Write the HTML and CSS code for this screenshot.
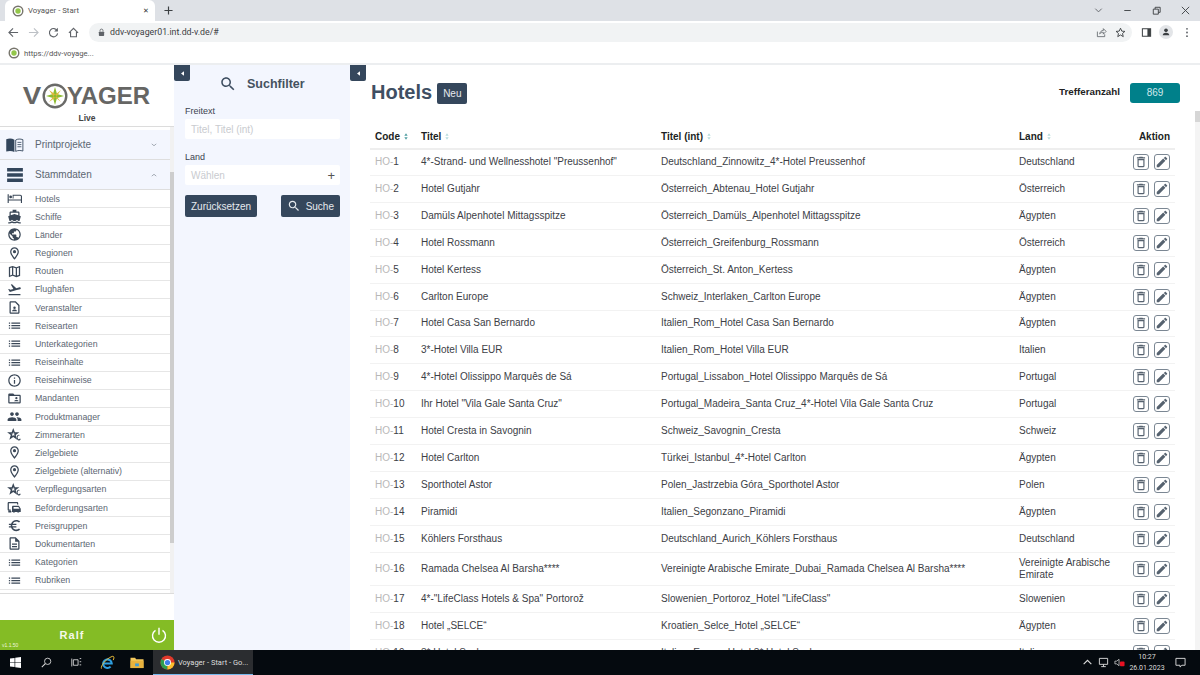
FILE: index.html
```html
<!DOCTYPE html>
<html>
<head>
    <meta charset="UTF-8">
    <title>Voyager - Start</title>
    <link rel="stylesheet" href="styles.css">
</head>
<body>
<svg class="defs" width="0" height="0">
    <symbol id="i-list" viewBox="0 0 24 24"><path d="M3 13h2v-2H3v2zm0 4h2v-2H3v2zm0-8h2V7H3v2zm4 4h14v-2H7v2zm0 4h14v-2H7v2zM7 7v2h14V7H7z"/></symbol>
    <symbol id="i-place" viewBox="0 0 24 24"><path d="M12 2C8.13 2 5 5.13 5 9c0 5.25 7 13 7 13s7-7.75 7-13c0-3.87-3.13-7-7-7zM7 9c0-2.76 2.24-5 5-5s5 2.24 5 5c0 2.88-2.88 7.19-5 9.88C9.92 16.21 7 11.85 7 9z"/><circle cx="12" cy="9" r="2.5"/></symbol>
    <symbol id="i-globe" viewBox="0 0 24 24"><path d="M12 2C6.48 2 2 6.48 2 12s4.48 10 10 10 10-4.48 10-10S17.52 2 12 2zm-1 17.93c-3.95-.49-7-3.85-7-7.93 0-.62.08-1.21.21-1.79L9 15v1c0 1.1.9 2 2 2v1.93zm6.9-2.54c-.26-.81-1-1.39-1.9-1.39h-1v-3c0-.55-.45-1-1-1H8v-2h2c.55 0 1-.45 1-1V7h2c1.1 0 2-.9 2-2v-.41c2.93 1.19 5 4.06 5 7.41 0 2.08-.8 3.97-2.1 5.39z"/></symbol>
    <symbol id="i-map" viewBox="0 0 24 24"><path d="M20.5 3l-.16.03L15 5.1 9 3 3.36 4.9c-.21.07-.36.25-.36.48V20.5c0 .28.22.5.5.5l.16-.03L9 18.9l6 2.1 5.64-1.9c.21-.07.36-.25.36-.48V3.5c0-.28-.22-.5-.5-.5zM10 5.47l4 1.4v11.66l-4-1.4V5.47zm-5 .99l3-1.01v11.7l-3 1.16V6.46zm14 11.08l-3 1.01V6.86l3-1.16v11.84z"/></symbol>
    <symbol id="i-plane" viewBox="0 0 24 24"><path d="M2.5 19h19v2h-19zm19.57-9.36c-.21-.8-1.04-1.28-1.84-1.06L14.92 10l-6.9-6.43-1.93.51 4.14 7.17-4.97 1.33-1.97-1.54-1.45.39 1.82 3.16.77 1.33 1.6-.43 5.31-1.42 4.35-1.16L21 11.49c.81-.23 1.28-1.05 1.07-1.85z"/></symbol>
    <symbol id="i-info" viewBox="0 0 24 24"><path d="M11 7h2v2h-2zm0 4h2v6h-2zm1-9C6.48 2 2 6.48 2 12s4.48 10 10 10 10-4.48 10-10S17.52 2 12 2zm0 18c-4.41 0-8-3.59-8-8s3.59-8 8-8 8 3.59 8 8-3.59 8-8 8z"/></symbol>
    <symbol id="i-doc" viewBox="0 0 24 24"><path d="M8 16h8v2H8zm0-4h8v2H8zm6-10H6c-1.1 0-2 .9-2 2v16c0 1.1.89 2 1.99 2H18c1.1 0 2-.9 2-2V8l-6-6zm4 18H6V4h7v5h5v11z"/></symbol>
    <symbol id="i-contact" viewBox="0 0 24 24"><path d="M14 2H6c-1.1 0-2 .9-2 2v16c0 1.1.9 2 2 2h12c1.1 0 2-.9 2-2V8l-6-6zm4 18H6V4h7l5 5v11z"/><circle cx="12" cy="12.5" r="2"/><path d="M8 18c0-1.8 2.2-2.7 4-2.7s4 .9 4 2.7z"/></symbol>
    <symbol id="i-euro" viewBox="0 0 24 24"><path d="M15 18.5c-2.51 0-4.68-1.42-5.76-3.5H15v-2H8.58c-.05-.33-.08-.66-.08-1s.03-.67.08-1H15V9H9.24C10.32 6.92 12.5 5.5 15 5.5c1.61 0 3.09.59 4.23 1.57L21 5.3C19.41 3.87 17.3 3 15 3c-3.92 0-7.24 2.51-8.48 6H3v2h3.06c-.04.33-.06.66-.06 1s.02.67.06 1H3v2h3.52c1.24 3.49 4.56 6 8.48 6 2.31 0 4.41-.87 6-2.3l-1.78-1.77c-1.13.98-2.6 1.57-4.22 1.57z"/></symbol>
    <symbol id="i-people" viewBox="0 0 24 24"><path d="M16 11c1.66 0 2.99-1.34 2.99-3S17.66 5 16 5c-1.66 0-3 1.34-3 3s1.34 3 3 3zm-8 0c1.66 0 2.99-1.34 2.99-3S9.66 5 8 5C6.34 5 5 6.34 5 8s1.34 3 3 3zm0 2c-2.33 0-7 1.17-7 3.5V19h14v-2.5c0-2.33-4.67-3.5-7-3.5zm8 0c-.29 0-.62.02-.97.05 1.16.84 1.97 1.97 1.97 3.45V19h6v-2.5c0-2.33-4.67-3.5-7-3.5z"/></symbol>
    <symbol id="i-folder" viewBox="0 0 24 24"><path d="M20 6h-8l-2-2H4c-1.1 0-2 .9-2 2v12c0 1.1.9 2 2 2h16c1.1 0 2-.9 2-2V8c0-1.1-.9-2-2-2zm0 12H4V8h16v10z"/><circle cx="15" cy="11.5" r="1.8"/><path d="M11.5 16.5c0-1.5 2-2.2 3.5-2.2s3.5.7 3.5 2.2z"/></symbol>
    <symbol id="i-star" viewBox="0 0 24 24"><path fill-rule="evenodd" d="M10 1.5l2.6 7h7.2l-5.8 4.4 2.2 7.3-6.200-4.400-6.200 4.400 2.200-7.300L.2 8.500h7.200zm0 6.500l-.9 2.600H6.800l1.900 1.500-.7 2.400 2-1.400 2 1.400-.7-2.400 1.900-1.500h-2.300z"/><path d="M19.500 12.500a3.500 4.500 0 1 0 2.500 6.500l-1.400-.7a2 2.800 0 1 1-.6-4z"/></symbol>
    <symbol id="i-ship" viewBox="0 0 24 24"><path d="M20 21c-1.39 0-2.78-.47-4-1.32-2.44 1.71-5.56 1.71-8 0C6.78 20.53 5.39 21 4 21H2v2h2c1.38 0 2.74-.35 4-.99 2.52 1.29 5.48 1.29 8 0 1.26.65 2.62.99 4 .99h2v-2h-2zM3.95 19H4c1.6 0 3.02-.88 4-2 .98 1.12 2.4 2 4 2s3.02-.88 4-2c.98 1.12 2.4 2 4 2h.05l1.89-6.68c.08-.26.06-.54-.06-.78s-.34-.42-.6-.5L20 10.62V6c0-1.1-.9-2-2-2h-3V1H9v3H6c-1.1 0-2 .9-2 2v4.62l-1.29.42c-.26.08-.48.26-.6.5s-.15.52-.06.78L3.95 19zM6 6h12v3.97L12 8 6 9.97V6z"/></symbol>
    <symbol id="i-bed" viewBox="0 0 24 24"><path d="M1 5h1.800v8.500h19.400V8.500c0-.6-.4-1-1-1H10.500v4.500H9V6h12.200c1.500 0 2.800 1.200 2.800 2.500V19h-1.800v-3.700H2.800V19H1z"/><circle cx="5.800" cy="9.500" r="2.200"/></symbol>
    <symbol id="i-transport" viewBox="0 0 24 24"><path d="M3 3h13c1.100 0 2 .9 2 2v2h-2V5H3v10h3v2H3c-1.100 0-2-.9-2-2V5c0-1.100.9-2 2-2z"/><path d="M10 9h9l3 5v5h-2.200a2 2 0 0 1-3.600 0h-3.400a2 2 0 0 1-3.600 0H8v-8c0-1.100.9-2 2-2zm.5 2v3H20l-1.800-3z"/><rect x="2" y="17" width="5" height="3" rx="1"/></symbol>
    <symbol id="i-trash" viewBox="0 0 24 24"><path d="M6 19c0 1.100.9 2 2 2h8c1.100 0 2-.9 2-2V7H6v12zM8 9h8v10H8V9zm7.500-5l-1-1h-5l-1 1H5v2h14V4z"/></symbol>
    <symbol id="i-edit" viewBox="0 0 24 24"><path d="M3 17.250V21h3.750L17.810 9.940l-3.750-3.750L3 17.250zM20.710 7.040c.39-.39.39-1.020 0-1.410l-2.340-2.340c-.39-.39-1.020-.39-1.410 0l-1.830 1.830 3.750 3.750 1.830-1.830z"/></symbol>
    <symbol id="i-search" viewBox="0 0 24 24"><path d="M15.500 14h-.79l-.28-.27C15.410 12.590 16 11.110 16 9.500 16 5.910 13.090 3 9.500 3S3 5.910 3 9.500 5.910 16 9.500 16c1.610 0 3.090-.59 4.230-1.570l.27.28v.79l5 4.990L20.490 19l-4.990-5zm-6 0C7.010 14 5 11.990 5 9.500S7.010 5 9.500 5 14 7.010 14 9.500 11.990 14 9.500 14z"/></symbol>
    <symbol id="i-sort" viewBox="0 0 6 10"><path d="M3 0l2.500 3.800h-5z"/><path d="M3 10L.5 6.200h5z"/></symbol>
    <symbol id="i-fav" viewBox="0 0 12 12"><circle cx="6" cy="6" r="4.800" fill="none" stroke="#77756c" stroke-width="1.400"/><circle cx="6" cy="6" r="2.700" fill="#93c64a"/></symbol>
</svg>

<div class="tabbar">
    <div class="tab">
        <svg class="fav"><use href="#i-fav"/></svg>
        <span class="tab-title">Voyager - Start</span>
        <span class="tab-close">&#10005;</span>
    </div>
    <svg class="new-tab" viewBox="0 0 10 10"><path d="M5 .5v9M.5 5h9" stroke="#3c4043" stroke-width="1.300"/></svg>
    <div class="window-btns">
        <svg viewBox="0 0 12 12"><path d="M2.500 4L6 7.500 9.500 4" fill="none" stroke="#5f6368" stroke-width="1"/></svg>
        <svg viewBox="0 0 12 12"><path d="M2.500 6h7" stroke="#3c4043" stroke-width="1"/></svg>
        <svg viewBox="0 0 12 12"><path d="M2.500 4.500h5.500v5.500H2.500zM4.500 4.500V2.500H10V8H8" fill="none" stroke="#3c4043" stroke-width="1"/></svg>
        <svg viewBox="0 0 12 12"><path d="M2 2l8 8M10 2l-8 8" stroke="#3c4043" stroke-width="1"/></svg>
    </div>
</div>

<div class="toolbar">
    <svg class="nav-icon" viewBox="0 0 12 12"><path d="M11 6H1.500M5.500 1.500L1 6l4.500 4.500" fill="none" stroke="#5f6368" stroke-width="1.200"/></svg>
    <svg class="nav-icon" viewBox="0 0 12 12"><path d="M1 6h9.500M6.500 1.500L11 6l-4.500 4.500" fill="none" stroke="#bdc1c6" stroke-width="1.200"/></svg>
    <svg class="nav-icon" viewBox="0 0 12 12"><path d="M10 4A4.500 4.500 0 1 0 10.500 7" fill="none" stroke="#5f6368" stroke-width="1.200"/><path d="M10.800 .8v4h-4z" fill="#5f6368"/></svg>
    <svg class="nav-icon" viewBox="0 0 12 12"><path d="M1 6.500L6 1.500l5 5M2.800 5.500v5.200h6.400V5.500" fill="none" stroke="#5f6368" stroke-width="1.200"/></svg>
    <div class="omnibox">
        <svg class="lock" viewBox="0 0 8 10"><rect x="1" y="4" width="6" height="5" rx=".8" fill="#5f6368"/><path d="M2.300 4V2.800a1.700 1.700 0 0 1 3.400 0V4" fill="none" stroke="#5f6368"/></svg>
        <span class="url">ddv-voyager01.int.dd-v.de/#</span>
        <svg class="omni-icon" viewBox="0 0 12 12"><path d="M1.500 5v5.500h8V8M4 7.500C4.500 5 6 3.800 8 3.800V1.800l3 3-3 3V5.800C6.500 5.800 5 6.300 4 7.500z" fill="none" stroke="#5f6368" stroke-width=".9"/></svg>
        <svg class="omni-icon" viewBox="0 0 12 12"><path d="M6 1.300l1.400 3.200 3.400.3-2.600 2.300.8 3.400L6 8.700l-3 1.800.8-3.400L1.200 4.800l3.400-.3z" fill="none" stroke="#3c4043" stroke-width="1"/></svg>
    </div>
    <svg class="side-icon" viewBox="0 0 12 12"><path d="M1.500 2h9v8h-9z" fill="none" stroke="#3c4043" stroke-width="1.100"/><path d="M7 2h3.500v8H7z" fill="#3c4043"/></svg>
    <span class="avatar"><svg viewBox="0 0 12 12"><circle cx="6" cy="4" r="2.200" fill="#3c4043"/><path d="M2 10c0-2 2.200-3 4-3s4 1 4 3z" fill="#3c4043"/></svg></span>
    <svg class="menu-dots" viewBox="0 0 4 12"><circle cx="2" cy="2" r="1" fill="#5f6368"/><circle cx="2" cy="6" r="1" fill="#5f6368"/><circle cx="2" cy="10" r="1" fill="#5f6368"/></svg>
</div>

<div class="bookmarks">
    <svg class="fav"><use href="#i-fav"/></svg>
    <span>https://ddv-voyage...</span>
</div>

<div class="app">
    <aside class="sidebar">
        <div class="logo-box">
            <div class="logo">
                <span>V</span>
                <svg class="compass" viewBox="0 0 26 26">
                    <circle cx="13" cy="13" r="11.300" fill="none" stroke="#6a6a68" stroke-width="2.400"/>
                    <path d="M13 4l2 7 7 2-7 2-2 7-2-7-7-2 7-2z" fill="#8dbb2f"/>
                    <path d="M7 7l6.500 4.500L19 7l-4.500 6.500L19 19l-5.500-4.500L7 19l4.500-5.500z" fill="#e0b83c"/>
                    <circle cx="13" cy="13" r="1.500" fill="#8dbb2f"/>
                </svg>
                <span>YAGER</span>
            </div>
            <div class="live">Live</div>
        </div>

        <div class="menu-wrap">
            <div class="menu">
                <div class="group">
                    <svg class="group-icon" viewBox="0 0 20 16"><path d="M0 1.500C3 .3 6.500.3 9.300 2v14C6.500 14.500 3 14.500 0 15.500z" fill="#33465c"/><path d="M10.800 2.300C13 .9 16.300.9 19 1.900v13c-2.700-.9-6-.9-8.200.4z" fill="none" stroke="#33465c"/><path d="M12.800 5h4.500M12.800 7.500h4.500M12.800 10h4.500" stroke="#33465c" stroke-width=".9"/></svg>
                    <span>Printprojekte</span>
                    <svg class="chev" viewBox="0 0 8 5"><path d="M1 1l3 2.500L7 1" fill="none" stroke="#8a929c"/></svg>
                </div>
                <div class="group">
                    <svg class="group-icon" viewBox="0 0 20 16"><rect x="1" y="0" width="18" height="4" fill="#33465c"/><rect x="1" y="6" width="18" height="4" fill="#33465c"/><rect x="1" y="12" width="18" height="4" fill="#33465c"/></svg>
                    <span>Stammdaten</span>
                    <svg class="chev" viewBox="0 0 8 5"><path d="M1 4l3-2.500L7 4" fill="none" stroke="#8a929c"/></svg>
                </div>
                <a class="item"><svg><use href="#i-bed"/></svg>Hotels</a>
                <a class="item"><svg><use href="#i-ship"/></svg>Schiffe</a>
                <a class="item"><svg><use href="#i-globe"/></svg>Länder</a>
                <a class="item"><svg><use href="#i-place"/></svg>Regionen</a>
                <a class="item"><svg><use href="#i-map"/></svg>Routen</a>
                <a class="item"><svg><use href="#i-plane"/></svg>Flughäfen</a>
                <a class="item"><svg><use href="#i-contact"/></svg>Veranstalter</a>
                <a class="item"><svg><use href="#i-list"/></svg>Reisearten</a>
                <a class="item"><svg><use href="#i-list"/></svg>Unterkategorien</a>
                <a class="item"><svg><use href="#i-list"/></svg>Reiseinhalte</a>
                <a class="item"><svg><use href="#i-info"/></svg>Reisehinweise</a>
                <a class="item"><svg><use href="#i-folder"/></svg>Mandanten</a>
                <a class="item"><svg><use href="#i-people"/></svg>Produktmanager</a>
                <a class="item"><svg><use href="#i-star"/></svg>Zimmerarten</a>
                <a class="item"><svg><use href="#i-place"/></svg>Zielgebiete</a>
                <a class="item"><svg><use href="#i-place"/></svg>Zielgebiete (alternativ)</a>
                <a class="item"><svg><use href="#i-star"/></svg>Verpflegungsarten</a>
                <a class="item"><svg><use href="#i-transport"/></svg>Beförderungsarten</a>
                <a class="item"><svg><use href="#i-euro"/></svg>Preisgruppen</a>
                <a class="item"><svg><use href="#i-doc"/></svg>Dokumentarten</a>
                <a class="item"><svg><use href="#i-list"/></svg>Kategorien</a>
                <a class="item"><svg><use href="#i-list"/></svg>Rubriken</a>
            </div>
            <div class="menu-scroll"><div class="menu-thumb"></div></div>
        </div>

        <div class="user-bar">
            <span class="user-name">Ralf</span>
            <svg class="power" viewBox="0 0 16 16"><path d="M4.500 3.300a6.500 6.500 0 1 0 7 0" fill="none" stroke="#fff" stroke-width="1.400"/><path d="M8 .8v7" stroke="#fff" stroke-width="1.400"/></svg>
            <span class="version">v1.1.50</span>
        </div>
    </aside>

    <section class="filter">
        <button class="collapse"><svg viewBox="0 0 4 6"><path d="M4 0v6L0 3z"/></svg></button>
        <div class="filter-head">
            <svg><use href="#i-search"/></svg>
            <span>Suchfilter</span>
        </div>
        <label class="field-label">Freitext</label>
        <div class="field"><span>Titel, Titel (int)</span></div>
        <label class="field-label">Land</label>
        <div class="field"><span>Wählen</span><b>+</b></div>
        <div class="filter-btns">
            <button class="btn">Zurücksetzen</button>
            <button class="btn"><svg><use href="#i-search"/></svg>Suche</button>
        </div>
    </section>

    <main class="content">
        <button class="collapse"><svg viewBox="0 0 4 6"><path d="M4 0v6L0 3z"/></svg></button>
        <div class="page-head">
            <h1>Hotels</h1>
            <button class="btn btn-new">Neu</button>
            <span class="count-label">Trefferanzahl</span>
            <span class="count">869</span>
        </div>
        <table class="hotels">
            <colgroup><col class="c-code"><col class="c-title"><col class="c-int"><col class="c-land"><col class="c-act"></colgroup>
            <thead>
                <tr>
                    <th>Code <svg class="sort first"><use href="#i-sort"/></svg></th>
                    <th>Titel <svg class="sort"><use href="#i-sort"/></svg></th>
                    <th>Titel (int) <svg class="sort"><use href="#i-sort"/></svg></th>
                    <th>Land <svg class="sort"><use href="#i-sort"/></svg></th>
                    <th class="act-head">Aktion</th>
                </tr>
            </thead>
            <tbody>
                <tr><td><i>HO-</i>1</td><td>4*-Strand- und Wellnesshotel "Preussenhof"</td><td>Deutschland_Zinnowitz_4*-Hotel Preussenhof</td><td>Deutschland</td><td class="act"><span class="ico"><svg><use href="#i-trash"/></svg></span><span class="ico"><svg><use href="#i-edit"/></svg></span></td></tr>
                <tr><td><i>HO-</i>2</td><td>Hotel Gutjahr</td><td>Österreich_Abtenau_Hotel Gutjahr</td><td>Österreich</td><td class="act"><span class="ico"><svg><use href="#i-trash"/></svg></span><span class="ico"><svg><use href="#i-edit"/></svg></span></td></tr>
                <tr><td><i>HO-</i>3</td><td>Damüls Alpenhotel Mittagsspitze</td><td>Österreich_Damüls_Alpenhotel Mittagsspitze</td><td>Ägypten</td><td class="act"><span class="ico"><svg><use href="#i-trash"/></svg></span><span class="ico"><svg><use href="#i-edit"/></svg></span></td></tr>
                <tr><td><i>HO-</i>4</td><td>Hotel Rossmann</td><td>Österreich_Greifenburg_Rossmann</td><td>Österreich</td><td class="act"><span class="ico"><svg><use href="#i-trash"/></svg></span><span class="ico"><svg><use href="#i-edit"/></svg></span></td></tr>
                <tr><td><i>HO-</i>5</td><td>Hotel Kertess</td><td>Österreich_St. Anton_Kertess</td><td>Ägypten</td><td class="act"><span class="ico"><svg><use href="#i-trash"/></svg></span><span class="ico"><svg><use href="#i-edit"/></svg></span></td></tr>
                <tr><td><i>HO-</i>6</td><td>Carlton Europe</td><td>Schweiz_Interlaken_Carlton Europe</td><td>Ägypten</td><td class="act"><span class="ico"><svg><use href="#i-trash"/></svg></span><span class="ico"><svg><use href="#i-edit"/></svg></span></td></tr>
                <tr><td><i>HO-</i>7</td><td>Hotel Casa San Bernardo</td><td>Italien_Rom_Hotel Casa San Bernardo</td><td>Ägypten</td><td class="act"><span class="ico"><svg><use href="#i-trash"/></svg></span><span class="ico"><svg><use href="#i-edit"/></svg></span></td></tr>
                <tr><td><i>HO-</i>8</td><td>3*-Hotel Villa EUR</td><td>Italien_Rom_Hotel Villa EUR</td><td>Italien</td><td class="act"><span class="ico"><svg><use href="#i-trash"/></svg></span><span class="ico"><svg><use href="#i-edit"/></svg></span></td></tr>
                <tr><td><i>HO-</i>9</td><td>4*-Hotel Olissippo Marquês de Sá</td><td>Portugal_Lissabon_Hotel Olissippo Marquês de Sá</td><td>Portugal</td><td class="act"><span class="ico"><svg><use href="#i-trash"/></svg></span><span class="ico"><svg><use href="#i-edit"/></svg></span></td></tr>
                <tr><td><i>HO-</i>10</td><td>Ihr Hotel "Vila Gale Santa Cruz"</td><td>Portugal_Madeira_Santa Cruz_4*-Hotel Vila Gale Santa Cruz</td><td>Portugal</td><td class="act"><span class="ico"><svg><use href="#i-trash"/></svg></span><span class="ico"><svg><use href="#i-edit"/></svg></span></td></tr>
                <tr><td><i>HO-</i>11</td><td>Hotel Cresta in Savognin</td><td>Schweiz_Savognin_Cresta</td><td>Schweiz</td><td class="act"><span class="ico"><svg><use href="#i-trash"/></svg></span><span class="ico"><svg><use href="#i-edit"/></svg></span></td></tr>
                <tr><td><i>HO-</i>12</td><td>Hotel Carlton</td><td>Türkei_Istanbul_4*-Hotel Carlton</td><td>Ägypten</td><td class="act"><span class="ico"><svg><use href="#i-trash"/></svg></span><span class="ico"><svg><use href="#i-edit"/></svg></span></td></tr>
                <tr><td><i>HO-</i>13</td><td>Sporthotel Astor</td><td>Polen_Jastrzebia Góra_Sporthotel Astor</td><td>Polen</td><td class="act"><span class="ico"><svg><use href="#i-trash"/></svg></span><span class="ico"><svg><use href="#i-edit"/></svg></span></td></tr>
                <tr><td><i>HO-</i>14</td><td>Piramidi</td><td>Italien_Segonzano_Piramidi</td><td>Ägypten</td><td class="act"><span class="ico"><svg><use href="#i-trash"/></svg></span><span class="ico"><svg><use href="#i-edit"/></svg></span></td></tr>
                <tr><td><i>HO-</i>15</td><td>Köhlers Forsthaus</td><td>Deutschland_Aurich_Köhlers Forsthaus</td><td>Deutschland</td><td class="act"><span class="ico"><svg><use href="#i-trash"/></svg></span><span class="ico"><svg><use href="#i-edit"/></svg></span></td></tr>
                <tr><td><i>HO-</i>16</td><td>Ramada Chelsea Al Barsha****</td><td>Vereinigte Arabische Emirate_Dubai_Ramada Chelsea Al Barsha****</td><td>Vereinigte Arabische Emirate</td><td class="act"><span class="ico"><svg><use href="#i-trash"/></svg></span><span class="ico"><svg><use href="#i-edit"/></svg></span></td></tr>
                <tr><td><i>HO-</i>17</td><td>4*-"LifeClass Hotels &amp; Spa" Portorož</td><td>Slowenien_Portoroz_Hotel "LifeClass"</td><td>Slowenien</td><td class="act"><span class="ico"><svg><use href="#i-trash"/></svg></span><span class="ico"><svg><use href="#i-edit"/></svg></span></td></tr>
                <tr><td><i>HO-</i>18</td><td>Hotel „SELCE“</td><td>Kroatien_Selce_Hotel „SELCE“</td><td>Ägypten</td><td class="act"><span class="ico"><svg><use href="#i-trash"/></svg></span><span class="ico"><svg><use href="#i-edit"/></svg></span></td></tr>
                <tr><td><i>HO-</i>19</td><td>3* Hotel Sacha</td><td>Italien_Eppan_Hotel 3* Hotel Sacha</td><td>Italien</td><td class="act"><span class="ico"><svg><use href="#i-trash"/></svg></span><span class="ico"><svg><use href="#i-edit"/></svg></span></td></tr>
            </tbody>
        </table>
        <div class="page-scroll"><div class="page-thumb"></div></div>
    </main>
</div>

<footer class="taskbar">
    <svg class="win" viewBox="0 0 12 12"><path d="M0 1.700L5 1v4.700H0zM5.700.9L12 0v5.700H5.700zM0 6.300h5V11l-5-.7zM5.700 6.300H12V12l-6.300-.9z" fill="#fff"/></svg>
    <svg class="task-icon" viewBox="0 0 14 14"><circle cx="8.500" cy="5.500" r="4" fill="none" stroke="#ddd" stroke-width="1.100"/><path d="M5.500 8.500L1 13" stroke="#ddd" stroke-width="1.300"/></svg>
    <svg class="task-icon" viewBox="0 0 14 14"><path d="M3 3.500h6v7H3zM1 2v10M11 2h2M11 6h2M11 10h2" fill="none" stroke="#ddd" stroke-width="1.100"/></svg>
    <svg class="ie" viewBox="0 0 16 16">
        <path d="M3.500 9h9a4.600 4.600 0 1 0-1.200 3.400" fill="none" stroke="#2e9fe0" stroke-width="2.200"/>
        <path d="M1.500 14.500C.5 12 6 4 13 1.500c2-.6 2.500 1.500 1 4" fill="none" stroke="#f0c23c" stroke-width="1"/>
    </svg>
    <svg class="task-icon folder-ic" viewBox="0 0 14 14"><path d="M0 2h5l1 1.500h8V13H0z" fill="#f4c95d"/><path d="M0 5h14v8H0z" fill="#e8b23e"/><rect x="5" y="8" width="4" height="3" fill="#3e9bd6"/></svg>
    <div class="task-app">
        <svg class="chrome" viewBox="0 0 16 16">
            <circle cx="8" cy="8" r="7.500" fill="#e0392b"/>
            <path d="M8 8L1.500 4.300A7.500 7.500 0 0 0 8 15.500z" fill="#2e9e4f"/>
            <path d="M8 8h7.500A7.500 7.500 0 0 1 8 15.500z" fill="#fbc02d"/>
            <circle cx="8" cy="8" r="3.700" fill="#fff"/><circle cx="8" cy="8" r="2.800" fill="#3f7fe8"/>
        </svg>
        <span>Voyager - Start - Go...</span>
    </div>
    <div class="tray">
        <svg viewBox="0 0 10 10"><path d="M1.500 6.500L5 3l3.500 3.500" fill="none" stroke="#ddd"/></svg>
        <svg viewBox="0 0 12 12"><path d="M1.500 1.500h9v6.500h-9zM6 8v2.500M3.500 10.500h5" fill="none" stroke="#ddd"/></svg>
        <svg viewBox="0 0 12 12"><path d="M1 4.500h2L5.500 2.500v7L3 7.500H1z" fill="none" stroke="#ddd" stroke-width=".8"/><rect x="6.500" y="5" width="5" height="5" rx="1" fill="#e81123"/></svg>
        <div class="clock"><span>10:27</span><span>26.01.2023</span></div>
        <svg class="notify" viewBox="0 0 12 12"><path d="M1 1.500h10v7.500H7.500L5.500 11V9H1z" fill="none" stroke="#ddd"/></svg>
    </div>
</footer>
</body>
</html>
```

FILE: styles.css
```css
*{
    box-sizing: border-box;
}
html, body{
    margin: 0;
    height: 100%;
}
body{
    width: 1200px;
    height: 675px;
    overflow: hidden;
    display: flex;
    flex-direction: column;
    font-family: "Liberation Sans", Arial, sans-serif;
    font-size: 10px;
    color: #3c4350;
    background: #fff;
}
.defs{
    position: absolute;
}
button{
    font-family: inherit;
    border: 0;
    padding: 0;
}

/* browser */
.tabbar{
    height: 21px;
    flex: none;
    display: flex;
    align-items: flex-end;
    background: #dee1e6;
    padding-left: 5px;
}
.tab{
    width: 150px;
    height: 21px;
    display: flex;
    align-items: center;
    background: #fff;
    border-radius: 6px 6px 0 0;
    padding: 0 6px 0 7px;
}
.fav{
    width: 12px;
    height: 12px;
    flex: none;
}
.tab-title{
    flex: 1;
    margin-left: 4px;
    font: 7.8px Roboto, sans-serif;
    color: #555;
}
.tab-close{
    font-size: 7px;
    color: #333;
}
.new-tab{
    width: 9px;
    height: 9px;
    margin: 0 0 6px 9px;
}
.window-btns{
    margin-left: auto;
    align-self: center;
    display: flex;
    gap: 18px;
    padding-right: 9px;
}
.window-btns svg{
    width: 11px;
    height: 11px;
}
.toolbar{
    height: 22px;
    flex: none;
    display: flex;
    align-items: center;
    padding-left: 8px;
    background: #fff;
}
.nav-icon{
    width: 11px;
    height: 11px;
    margin-right: 9px;
}
.omnibox{
    width: 1043px;
    height: 19px;
    margin-left: 1px;
    display: flex;
    align-items: center;
    border-radius: 10px;
    background: #f1f3f4;
    padding: 0 6px 0 9px;
}
.lock{
    width: 7px;
    height: 9px;
    margin-right: 5px;
}
.url{
    flex: 1;
    font: 8.8px Roboto, sans-serif;
    color: #3c4043;
}
.omni-icon{
    width: 11px;
    height: 11px;
    margin-left: 8px;
}
.side-icon{
    width: 11px;
    height: 11px;
    margin-left: 9px;
}
.avatar{
    width: 14px;
    height: 14px;
    margin-left: 7px;
    border-radius: 50%;
    background: #e3e5e8;
    display: flex;
    align-items: center;
    justify-content: center;
}
.avatar svg{
    width: 10px;
    height: 10px;
}
.menu-dots{
    width: 4px;
    height: 11px;
    margin-left: 12px;
}
.bookmarks{
    height: 22px;
    flex: none;
    display: flex;
    align-items: center;
    gap: 4px;
    padding-left: 8px;
    font: 7.7px Roboto, sans-serif;
    color: #555;
    border-bottom: 2px solid #eceef0;
}

/* app layout */
.app{
    flex: 1;
    min-height: 0;
    display: flex;
}
.sidebar{
    width: 174px;
    flex: none;
    display: flex;
    flex-direction: column;
}
.logo-box{
    height: 62px;
    flex: none;
    padding-top: 18px;
    border-bottom: 1px solid #dcdcdc;
}
.logo{
    display: flex;
    justify-content: center;
    align-items: center;
    height: 26px;
    font-size: 24px;
    font-weight: bold;
    color: #666664;
    line-height: 26px;
}
.logo span:first-child{
    transform: scaleX(1.15);
    margin-right: 2px;
}
.compass{
    width: 26px;
    height: 26px;
    margin-right: -1px;
}
.live{
    margin-top: 4px;
    text-align: center;
    font-size: 8.5px;
    font-weight: bold;
    color: #444;
}
.menu-wrap{
    height: 467px;
    flex: none;
    display: flex;
    border-bottom: 1px solid #dcdcdc;
}
.menu{
    width: 170px;
    flex: none;
    padding-top: 3px;
}
.menu-scroll{
    width: 4px;
    flex: none;
    background: #f1f1f1;
}
.menu-thumb{
    margin-top: 45px;
    height: 371px;
    background: #cdcdcd;
}
.group{
    height: 30px;
    display: flex;
    align-items: center;
    background: #f3f6fe;
    border-bottom: 1px solid #dedede;
    padding: 0 13px 0 6px;
    font-size: 10px;
    color: #5c6672;
}
.group-icon{
    width: 18px;
    height: 14px;
    margin-right: 11px;
}
.group span{
    flex: 1;
}
.chev{
    width: 6px;
    height: 4px;
}
.item{
    height: 18.18px;
    display: flex;
    align-items: center;
    border-bottom: 1px solid #e6e6e6;
    padding-left: 7px;
    font-size: 8.8px;
    color: #5c6672;
}
.item svg{
    width: 15px;
    height: 15px;
    margin-right: 13px;
    fill: #3a4757;
    flex: none;
}
.user-bar{
    margin-top: auto;
    height: 30px;
    flex: none;
    position: relative;
    display: flex;
    align-items: center;
    background: #84bc25;
    padding-right: 7px;
}
.user-name{
    flex: 1;
    text-align: center;
    padding-right: 7px;
    font-size: 11px;
    font-weight: bold;
    letter-spacing: 1px;
    color: #f4f9e8;
}
.power{
    width: 16px;
    height: 16px;
}
.version{
    position: absolute;
    left: 2px;
    bottom: 2px;
    font-size: 5px;
    color: #eef5dd;
}
.collapse{
    position: absolute;
    top: 0;
    left: 0;
    width: 16px;
    height: 16px;
    border-radius: 0 0 2px 2px;
    background: #35475c;
    display: flex;
    align-items: center;
    justify-content: center;
}
.collapse svg{
    width: 3px;
    height: 5px;
    fill: #fff;
}

/* filter */
.filter{
    width: 176px;
    flex: none;
    position: relative;
    background: #f3f6fe;
    padding: 0 10px 0 11px;
}
.filter-head{
    height: 38px;
    display: flex;
    align-items: center;
    padding-left: 34px;
    font-size: 12.5px;
    font-weight: bold;
    color: #46525f;
}
.filter-head svg{
    width: 18px;
    height: 18px;
    margin-right: 10px;
    fill: #3d4d60;
}
.field-label{
    display: block;
    margin-top: 2px;
    font-size: 9px;
    line-height: 13px;
    color: #3c4350;
}
.field{
    height: 20px;
    margin: 1px 0 12px;
    display: flex;
    align-items: center;
    justify-content: space-between;
    background: #fff;
    border-radius: 2px;
    padding: 0 5px 0 6px;
    color: #c9cbcf;
}
.field b{
    font-weight: normal;
    font-size: 13px;
    color: #555;
}
.filter-btns{
    display: flex;
    justify-content: space-between;
    margin-top: -2px;
}
.btn{
    height: 22px;
    display: flex;
    align-items: center;
    padding: 0 6px;
    border-radius: 2px;
    background: #35475c;
    font-size: 10px;
    color: #e6eaee;
}
.btn svg{
    width: 14px;
    height: 14px;
    margin-right: 5px;
    fill: #e6eaee;
}

/* content */
.content{
    flex: 1;
    min-width: 0;
    position: relative;
    overflow: hidden;
    padding: 0 25px 0 20px;
}
.page-head{
    height: 60px;
    padding-top: 18px;
    display: flex;
    align-items: flex-start;
}
h1{
    margin: -2px 5px 0 1px;
    font-size: 20px;
    line-height: 23px;
    color: #3f4f63;
}
.btn-new{
    height: 21px;
    padding: 0 6px;
    font-size: 10px;
}
.count-label{
    margin-left: auto;
    line-height: 18px;
    font-size: 9.8px;
    font-weight: bold;
    color: #222;
}
.count{
    width: 50px;
    height: 20px;
    margin: 0 -5px 0 10px;
    border-radius: 3px;
    background: #00808a;
    text-align: center;
    line-height: 20px;
    color: #cfe8ea;
}
.hotels{
    width: 805px;
    table-layout: fixed;
    border-collapse: collapse;
}
.c-code{
    width: 46px;
}
.c-title{
    width: 240px;
}
.c-int{
    width: 358px;
}
.c-land{
    width: 114px;
}
.c-act{
    width: 47px;
}
th{
    height: 23.5px;
    padding: 0 0 0 5px;
    text-align: left;
    font-size: 10px;
    color: #1c1f24;
    border-bottom: 2px solid #eeeeee;
    white-space: nowrap;
}
.act-head{
    text-align: right;
    padding-right: 5px;
}
.sort{
    width: 4px;
    height: 7px;
    fill: #b9dcdd;
    margin-left: 1px;
}
.sort.first{
    fill: #4f9ea1;
}
td{
    height: 26.93px;
    padding: 4px 0 4px 5px;
    border-bottom: 1px solid #f2f2f2;
    line-height: 12px;
    color: #3c4046;
    white-space: nowrap;
}
td:nth-child(4){
    white-space: normal;
}
td i{
    font-style: normal;
    color: #b8b8b8;
}
.act{
    padding: 0 0 0 5px;
    white-space: nowrap;
}
.ico{
    display: inline-flex;
    align-items: center;
    justify-content: center;
    width: 16px;
    height: 16px;
    margin-right: 5px;
    border: 1px solid #7b8793;
    border-radius: 3px;
    vertical-align: middle;
}
.ico svg{
    width: 14px;
    height: 14px;
    fill: #56626f;
}
.page-scroll{
    position: absolute;
    top: 46px;
    right: 0;
    bottom: 0;
    width: 5px;
    background: #f4f4f4;
}
.page-thumb{
    height: 11px;
    background: #d6d6d6;
}

/* windows taskbar */
.taskbar{
    height: 25px;
    flex: none;
    display: flex;
    align-items: center;
    background: #050a0f;
    color: #ddd;
    padding-left: 10px;
}
.win{
    width: 11px;
    height: 11px;
    margin-right: 20px;
}
.task-icon{
    width: 11px;
    height: 11px;
    margin-right: 19px;
}
.ie{
    width: 15px;
    height: 15px;
    margin: 0 15px 0 -1px;
}
.folder-ic{
    width: 14px;
    height: 13px;
    margin-right: 9px;
}
.task-app{
    width: 100px;
    height: 25px;
    display: flex;
    align-items: center;
    gap: 3px;
    padding-left: 7px;
    background: #2b2d30;
    border-bottom: 1px solid #76b9ed;
    font: 7.5px Roboto, sans-serif;
    white-space: nowrap;
}
.chrome{
    width: 15px;
    height: 15px;
    flex: none;
}
.tray{
    margin-left: auto;
    display: flex;
    align-items: center;
    gap: 5px;
    padding-right: 14px;
}
.tray svg{
    width: 11px;
    height: 11px;
}
.clock{
    width: 38px;
    margin-left: -2px;
    display: flex;
    flex-direction: column;
    align-items: center;
    font: 7px/11px Roboto, sans-serif;
}
.tray .notify{
    margin-left: 4px;
}
```
